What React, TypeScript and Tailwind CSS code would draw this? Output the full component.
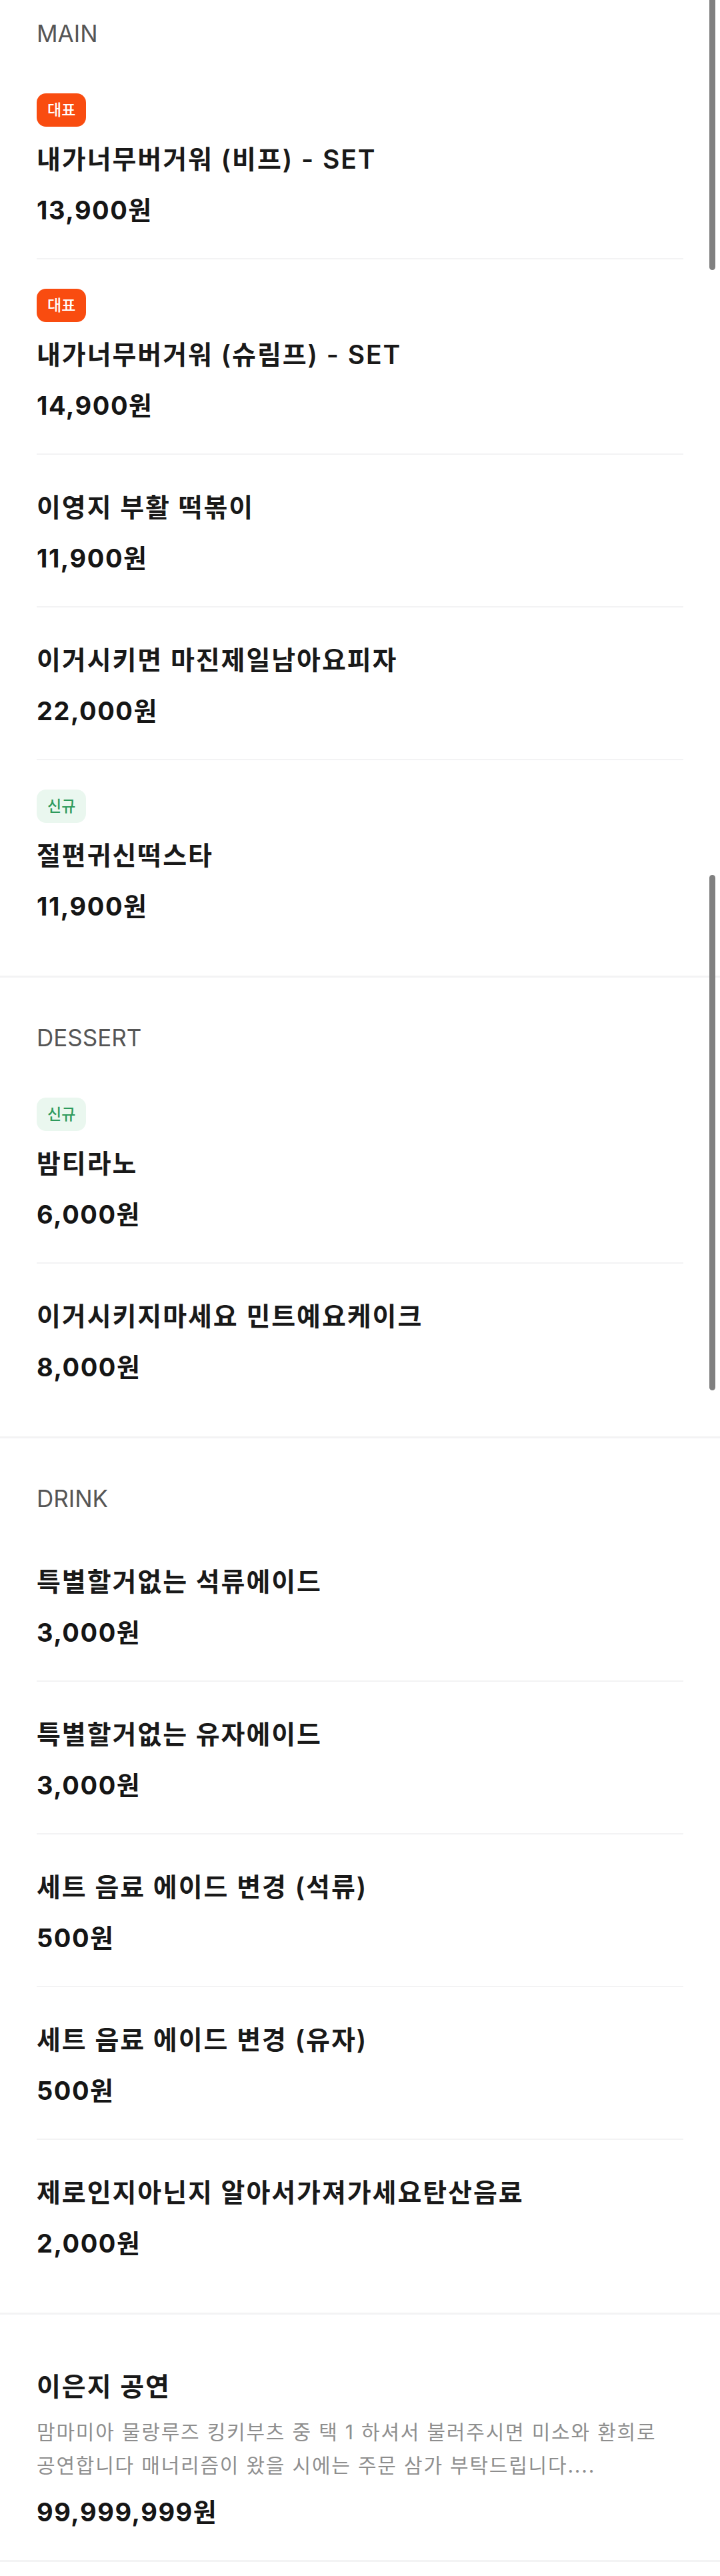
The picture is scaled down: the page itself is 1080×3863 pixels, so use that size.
import React from "react";

type Badge = "best" | "new";

type MenuItem = {
  name: string;
  price: string;
  badge?: Badge;
  desc?: string;
};

type Section = {
  title?: string;
  items: MenuItem[];
};

const sections: Section[] = [
  {
    title: "MAIN",
    items: [
      { name: "내가너무버거워 (비프) - SET", price: "13,900원", badge: "best" },
      { name: "내가너무버거워 (슈림프) - SET", price: "14,900원", badge: "best" },
      { name: "이영지 부활 떡볶이", price: "11,900원" },
      { name: "이거시키면 마진제일남아요피자", price: "22,000원" },
      { name: "절편귀신떡스타", price: "11,900원", badge: "new" },
    ],
  },
  {
    title: "DESSERT",
    items: [
      { name: "밤티라노", price: "6,000원", badge: "new" },
      { name: "이거시키지마세요 민트예요케이크", price: "8,000원" },
    ],
  },
  {
    title: "DRINK",
    items: [
      { name: "특별할거없는 석류에이드", price: "3,000원" },
      { name: "특별할거없는 유자에이드", price: "3,000원" },
      { name: "세트 음료 에이드 변경 (석류)", price: "500원" },
      { name: "세트 음료 에이드 변경 (유자)", price: "500원" },
      { name: "제로인지아닌지 알아서가져가세요탄산음료", price: "2,000원" },
    ],
  },
  {
    items: [
      {
        name: "이은지 공연",
        price: "99,999,999원",
        desc: "맘마미아 물랑루즈 킹키부츠 중 택 1 하셔서 불러주시면 미소와 환희로 공연합니다 매너리즘이 왔을 시에는 주문 삼가 부탁드립니다....",
      },
    ],
  },
];

function BadgeTag({ type }: { type: Badge }) {
  if (type === "best") {
    return (
      <span className="inline-flex h-[50px] items-center rounded-[14px] bg-[#f94c10] px-[16px] text-[23px] leading-none font-medium text-white">
        대표
      </span>
    );
  }
  return (
    <span className="inline-flex h-[50px] items-center rounded-[14px] bg-[#eaf7ef] px-[16px] text-[23px] leading-none font-medium text-[#2e9a5c]">
      신규
    </span>
  );
}

function Row({ item, last }: { item: MenuItem; last: boolean }) {
  return (
    <div className={last ? "" : "border-b-2 border-[#f3f3f4]"}>
      <div className={item.badge ? "pt-[44px] pb-[46px]" : "pt-[53px] pb-[46px]"}>
        {item.badge && (
          <div className="mb-[23px] flex">
            <BadgeTag type={item.badge} />
          </div>
        )}
        <p className="text-[39px] leading-[52px] font-semibold tracking-[0.05em] text-[#191919]">{item.name}</p>
        {item.desc && (
          <p className="mt-[17px] pr-[20px] text-[30px] leading-[50px] tracking-[0.06em] text-[#8e8e8e]">{item.desc}</p>
        )}
        <p
          className={
            item.desc
              ? "mt-[19px] text-[38px] leading-[52px] font-bold tracking-[0.04em] text-[#151515]"
              : "mt-[24px] text-[38px] leading-[52px] font-bold tracking-[0.04em] text-[#151515]"
          }
        >
          {item.price}
        </p>
      </div>
    </div>
  );
}

export default function App() {
  return (
    <div
      className="relative min-h-[3863px] w-full bg-white"
      style={{ fontFamily: 'Inter, "Noto Sans CJK KR", "Noto Sans", sans-serif' }}
    >
      {sections.map((section, si) => (
        <section
          key={si}
          className={
            si === 0
              ? "pt-[26px] pb-[32px]"
              : section.title
              ? "border-t-[3px] border-[#f3f3f4] pt-[66px] pb-[32px]"
              : "border-t-[3px] border-b-[3px] border-[#f3f3f4] pt-[29px]"
          }
        >
          <div className="px-[55px]">
            {section.title && (
              <h2 className="mb-[22px] text-[35px] leading-[48px] font-normal text-[#555555]">{section.title}</h2>
            )}
            {section.items.map((item, i) => (
              <Row key={item.name} item={item} last={i === section.items.length - 1} />
            ))}
          </div>
        </section>
      ))}

      {/* scroll indicators captured in the screenshot */}
      <div className="absolute top-0 right-[7px] h-[405px] w-[9px] rounded-b-full bg-[#808080]" />
      <div className="absolute top-[1312px] right-[7px] h-[773px] w-[9px] rounded-full bg-[#808080]" />
    </div>
  );
}
